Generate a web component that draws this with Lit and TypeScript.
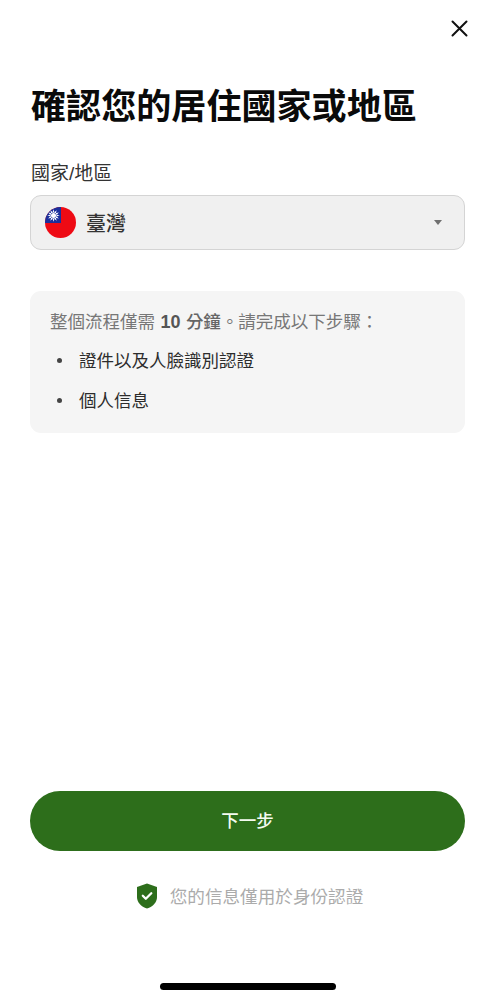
import { LitElement, html, css, svg } from "lit";
import { customElement } from "lit/decorators.js";

@customElement("app-root")
export class AppRoot extends LitElement {
  static styles = css`
    :host {
      display: flex;
      flex-direction: column;
      width: 495px;
      height: 1000px;
      box-sizing: border-box;
      padding: 0 30px;
      background: #fff;
      font-family: "Noto Sans CJK TC", sans-serif;
      color: #1c1c1c;
    }
    .top { display: flex; justify-content: flex-end; padding: 19px 0 0; margin-right: -4px; height: 57px; box-sizing: border-box; }
    .close { width: 19px; height: 19px; display: block; }
    h1 {
      margin: 24px 0 0 1px;
      font-size: 35.1px;
      line-height: 46px;
      font-weight: 700;
      color: #0a0a0a;
    }
    .label { margin: 34px 0 0 1px; font-size: 19px; line-height: 26px; color: #333; font-family: "Liberation Sans", "Noto Sans CJK TC", sans-serif; }
    .select {
      margin-top: 8px;
      height: 55px;
      box-sizing: border-box;
      display: flex;
      align-items: center;
      gap: 10px;
      padding: 0 22px 0 14px;
      border: 1px solid #d4d4d4;
      border-radius: 11px;
      background: #f0f0f0;
    }
    .flag { width: 31px; height: 31px; display: block; }
    .value { flex: 1; font-size: 20px; line-height: 28px; color: #333; font-weight: 500; }
    .arrow { width: 0; height: 0; border-left: 4.500px solid transparent; border-right: 4.500px solid transparent; border-top: 5px solid #707070; }
    .info {
      margin-top: 41px;
      height: 142px;
      box-sizing: border-box;
      padding: 18px 20px 0;
      border-radius: 11px;
      background: #f5f5f5;
    }
    .lead { font-size: 17.5px; line-height: 24px; color: #777; word-spacing: 1.500px; }
    .num { font: 700 18px/24px "Liberation Sans", sans-serif; color: #555; }
    .strong { color: #666; font-weight: 500; }
    ul { list-style: none; margin: 14px 0 0; padding: 0; display: flex; flex-direction: column; gap: 16px; }
    li { display: flex; align-items: center; font-size: 17.5px; line-height: 24px; color: #2c2c2c; padding-left: 7px; gap: 17px; }
    .dot { width: 5px; height: 5px; border-radius: 50%; background: #444; flex: none; }
    .spacer { flex: 1; }
    .btn {
      height: 60px;
      border: 0;
      border-radius: 30px;
      background: #2d6e1b;
      color: #f4fbf0;
      font: 500 17.5px/24px "Noto Sans CJK TC", sans-serif;
      width: 435px;
      display: flex;
      align-items: center;
      justify-content: center;
      padding: 0 0 2px;
    }
    .note {
      margin-top: 32px;
      display: flex;
      align-items: center;
      justify-content: center;
      gap: 13px;
      font-size: 17.6px;
      line-height: 26px;
      color: #ababab;
      padding-left: 5px;
    }
    .shield { width: 20px; height: 26px; display: block; }
    .home-row { display: flex; justify-content: center; margin-top: 74px; padding-bottom: 10px; }
    .home { width: 176px; height: 7px; border-radius: 4px; background: #000; }
  `;

  private flagRays() {
    const rays = [];
    for (let i = 0; i < 12; i++) {
      rays.push(svg`<path d="M0-6.200 1.100-2.500H-1.100Z" fill="#fff" transform="rotate(${i * 30})" />`);
    }
    return rays;
  }

  render() {
    return html`
      <div class="top">
        <svg class="close" viewBox="0 0 19 19" fill="none" stroke="#111" stroke-width="2" stroke-linecap="round" aria-label="關閉">
          <path d="M2.500 2.500 16.500 16.500M16.500 2.500 2.500 16.500" />
        </svg>
      </div>
      <h1>確認您的居住國家或地區</h1>
      <div class="label">國家/地區</div>
      <div class="select">
        <svg class="flag" viewBox="0 0 31 31" aria-hidden="true">
          <defs><clipPath id="c"><circle cx="15.5" cy="15.5" r="15.5" /></clipPath></defs>
          <g clip-path="url(#c)">
            <rect width="31" height="31" fill="#ee0a14" />
            <rect width="16" height="16" fill="#1a2f9c" />
            <g transform="translate(8.500 8.500)">
              ${this.flagRays()}
              <circle r="3" fill="#1a2f9c" />
              <circle r="2.500" fill="#fff" />
            </g>
          </g>
        </svg>
        <span class="value">臺灣</span>
        <span class="arrow"></span>
      </div>
      <div class="info">
        <div class="lead">整個流程僅需 <span class="num">10</span> <span class="strong">分鐘</span>。請完成以下步驟：</div>
        <ul>
          <li><span class="dot"></span>證件以及人臉識別認證</li>
          <li><span class="dot"></span>個人信息</li>
        </ul>
      </div>
      <div class="spacer"></div>
      <button class="btn">下一步</button>
      <div class="note">
        <svg class="shield" viewBox="0 0 20 26" aria-hidden="true">
          <path d="M10 .5 20 4v10c0 5.500-4 9.500-10 11.500C4 23.500 0 19.500 0 14V4Z" fill="#2d6e1b" />
          <path d="M5.800 12.800 8.800 15.800 14.300 10.300" fill="none" stroke="#fff" stroke-width="2.300" stroke-linecap="round" stroke-linejoin="round" />
        </svg>
        <span>您的信息僅用於身份認證</span>
      </div>
      <div class="home-row"><div class="home"></div></div>
    `;
  }
}
